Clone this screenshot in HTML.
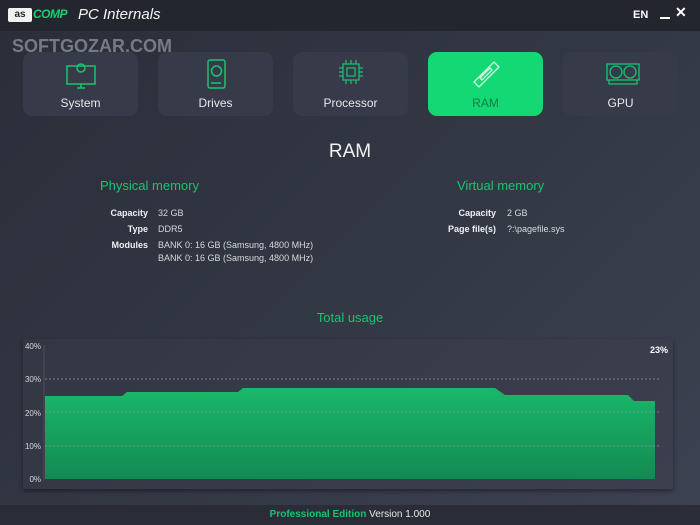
<!DOCTYPE html>
<html><head><meta charset="utf-8"><style>
*{margin:0;padding:0;box-sizing:border-box}
body{width:700px;height:525px;overflow:hidden;font-family:"Liberation Sans",sans-serif;background:linear-gradient(135deg,#2a2e39 0%,#343946 60%,#3d4252 100%);position:relative;color:#e8e8ec}
.title{position:absolute;left:0;top:0;width:700px;height:31px;background:#23262e}
.tab{position:absolute;top:52px;width:115px;height:64px;border-radius:9px;background:#373b49;text-align:center;font-size:12px;color:#e6e7ea}
.tab span{position:absolute;left:0;right:0;top:44px}
.tab svg{position:absolute;left:42px;top:6px}
.abs{position:absolute;white-space:nowrap}
.lab{font-size:9px;font-weight:bold;color:#f0f0f2;text-align:right}
.val{font-size:9px;color:#d8d9de}
.g{color:#18c46e}
</style></head><body>
<div class="title"></div>
<div class="abs" style="left:8px;top:8px;width:24px;height:14px;background:#f2f2f2;border-radius:2px;font-size:10px;font-weight:bold;color:#23262e;line-height:14px;text-align:center">as</div>
<div class="abs" style="left:33px;top:7px;font-size:12px;font-weight:bold;color:#18d070;font-style:italic;letter-spacing:-0.5px">COMP</div>
<div class="abs" style="left:78px;top:6px;font-size:15px;font-style:italic;color:#f4f4f6">PC Internals</div>
<div class="abs" style="left:633px;top:9px;font-size:11px;font-weight:bold;color:#fff">EN</div>
<div class="abs" style="left:660px;top:17px;width:10px;height:2px;background:#fff"></div>
<div class="abs" style="left:675px;top:4px;font-size:14px;font-weight:bold;color:#fff">✕</div>
<div class="abs" style="left:12px;top:36px;font-size:18px;font-weight:bold;color:#8a8d96;opacity:.8">SOFTGOZAR.COM</div>

<div class="tab" style="left:23px"><svg width="32" height="34" viewBox="0 0 32 34" fill="none" stroke="#18c46e" stroke-width="1.5"><rect x="2" y="8" width="28" height="18"/><path d="M12 30h8M16 26v4"/><circle cx="16" cy="10" r="4"/></svg><span>System</span></div>
<div class="tab" style="left:158px"><svg width="32" height="34" viewBox="0 0 32 34" fill="none" stroke="#18c46e" stroke-width="1.5"><rect x="8" y="2" width="17" height="28" rx="2"/><circle cx="16.5" cy="13" r="5"/><path d="M11 25h10"/></svg><span>Drives</span></div>
<div class="tab" style="left:293px"><svg width="32" height="34" viewBox="0 0 32 34" fill="none" stroke="#18c46e" stroke-width="1.2"><rect x="8" y="6" width="16" height="16"/><rect x="12" y="10" width="8" height="8"/><path d="M11 2v4M16 2v4M21 2v4M11 22v4M16 22v4M21 22v4M4 10h4M4 14h4M4 18h4M24 10h4M24 14h4M24 18h4"/></svg><span>Processor</span></div>
<div class="tab" style="left:428px;background:#14d873;color:#157a45"><svg width="32" height="34" viewBox="0 0 32 34" fill="none" stroke="#d4f5e2" stroke-width="1.3"><path d="M4 24L24 4l5 5L9 29z"/><path d="M10 20l10-10 2 2-10 10z"/></svg><span>RAM</span></div>
<div class="tab" style="left:563px"><svg width="36" height="34" viewBox="0 0 36 34" fill="none" stroke="#18c46e" stroke-width="1.3"><rect x="2" y="6" width="32" height="16"/><circle cx="11" cy="14" r="6"/><circle cx="25" cy="14" r="6"/><path d="M4 22v4h28v-4"/></svg><span>GPU</span></div>

<div class="abs" style="left:0;width:700px;top:141px;text-align:center;font-size:19px;color:#f2f2f4">RAM</div>
<div class="abs g" style="left:100px;top:178px;font-size:13px">Physical memory</div>
<div class="abs g" style="left:457px;top:178px;font-size:13px">Virtual memory</div>
<div class="abs lab" style="left:90px;width:58px;top:208px">Capacity</div>
<div class="abs lab" style="left:90px;width:58px;top:224px">Type</div>
<div class="abs lab" style="left:90px;width:58px;top:240px">Modules</div>
<div class="abs val" style="left:158px;top:208px">32 GB</div>
<div class="abs val" style="left:158px;top:224px">DDR5</div>
<div class="abs val" style="left:158px;top:240px">BANK 0: 16 GB (Samsung, 4800 MHz)</div>
<div class="abs val" style="left:158px;top:253px">BANK 0: 16 GB (Samsung, 4800 MHz)</div>
<div class="abs lab" style="left:430px;width:66px;top:208px">Capacity</div>
<div class="abs lab" style="left:430px;width:66px;top:224px">Page file(s)</div>
<div class="abs val" style="left:507px;top:208px">2 GB</div>
<div class="abs val" style="left:507px;top:224px">?:\pagefile.sys</div>
<div class="abs g" style="left:0;width:700px;text-align:center;top:310px;font-size:13px">Total usage</div>

<div class="abs" style="left:23px;top:339px;width:650px;height:150px;background:linear-gradient(135deg,#333744,#3b3f4e);box-shadow:0 2px 4px rgba(0,0,0,.4)"></div>
<svg class="abs" style="left:0;top:0" width="700" height="525">
<defs><linearGradient id="gg" x1="0" y1="0" x2="0" y2="1"><stop offset="0" stop-color="#1ab86b"/><stop offset="1" stop-color="#128a52"/></linearGradient></defs>
<polygon fill="url(#gg)" points="45,479 45,396 122,396 127,392 238,392 243,388 495,388 505,395 628,395 634,401 655,401 655,479"/>
<g stroke="#8a8e9a" stroke-dasharray="2,2" stroke-width="1" opacity=".8"><line x1="45" y1="379" x2="660" y2="379"/><line x1="45" y1="412" x2="660" y2="412"/><line x1="45" y1="446" x2="660" y2="446"/></g>
<line x1="44" y1="345" x2="44" y2="480" stroke="#4a4e5c"/>
<g font-size="8" fill="#d8d9de" font-family="Liberation Sans" text-anchor="end"><text x="41" y="349">40%</text><text x="41" y="382">30%</text><text x="41" y="416">20%</text><text x="41" y="449">10%</text><text x="41" y="482">0%</text></g>
<text x="668" y="353" font-size="9" font-weight="bold" fill="#fff" text-anchor="end" font-family="Liberation Sans">23%</text>
</svg>
<div class="abs" style="left:0;top:505px;width:700px;height:20px;background:#2a2d37"></div>
<div class="abs" style="left:0;width:700px;text-align:center;top:509px;font-size:10px"><b class="g">Professional Edition</b> <span style="color:#e8e8ec">Version 1.000</span></div>
</body></html>
